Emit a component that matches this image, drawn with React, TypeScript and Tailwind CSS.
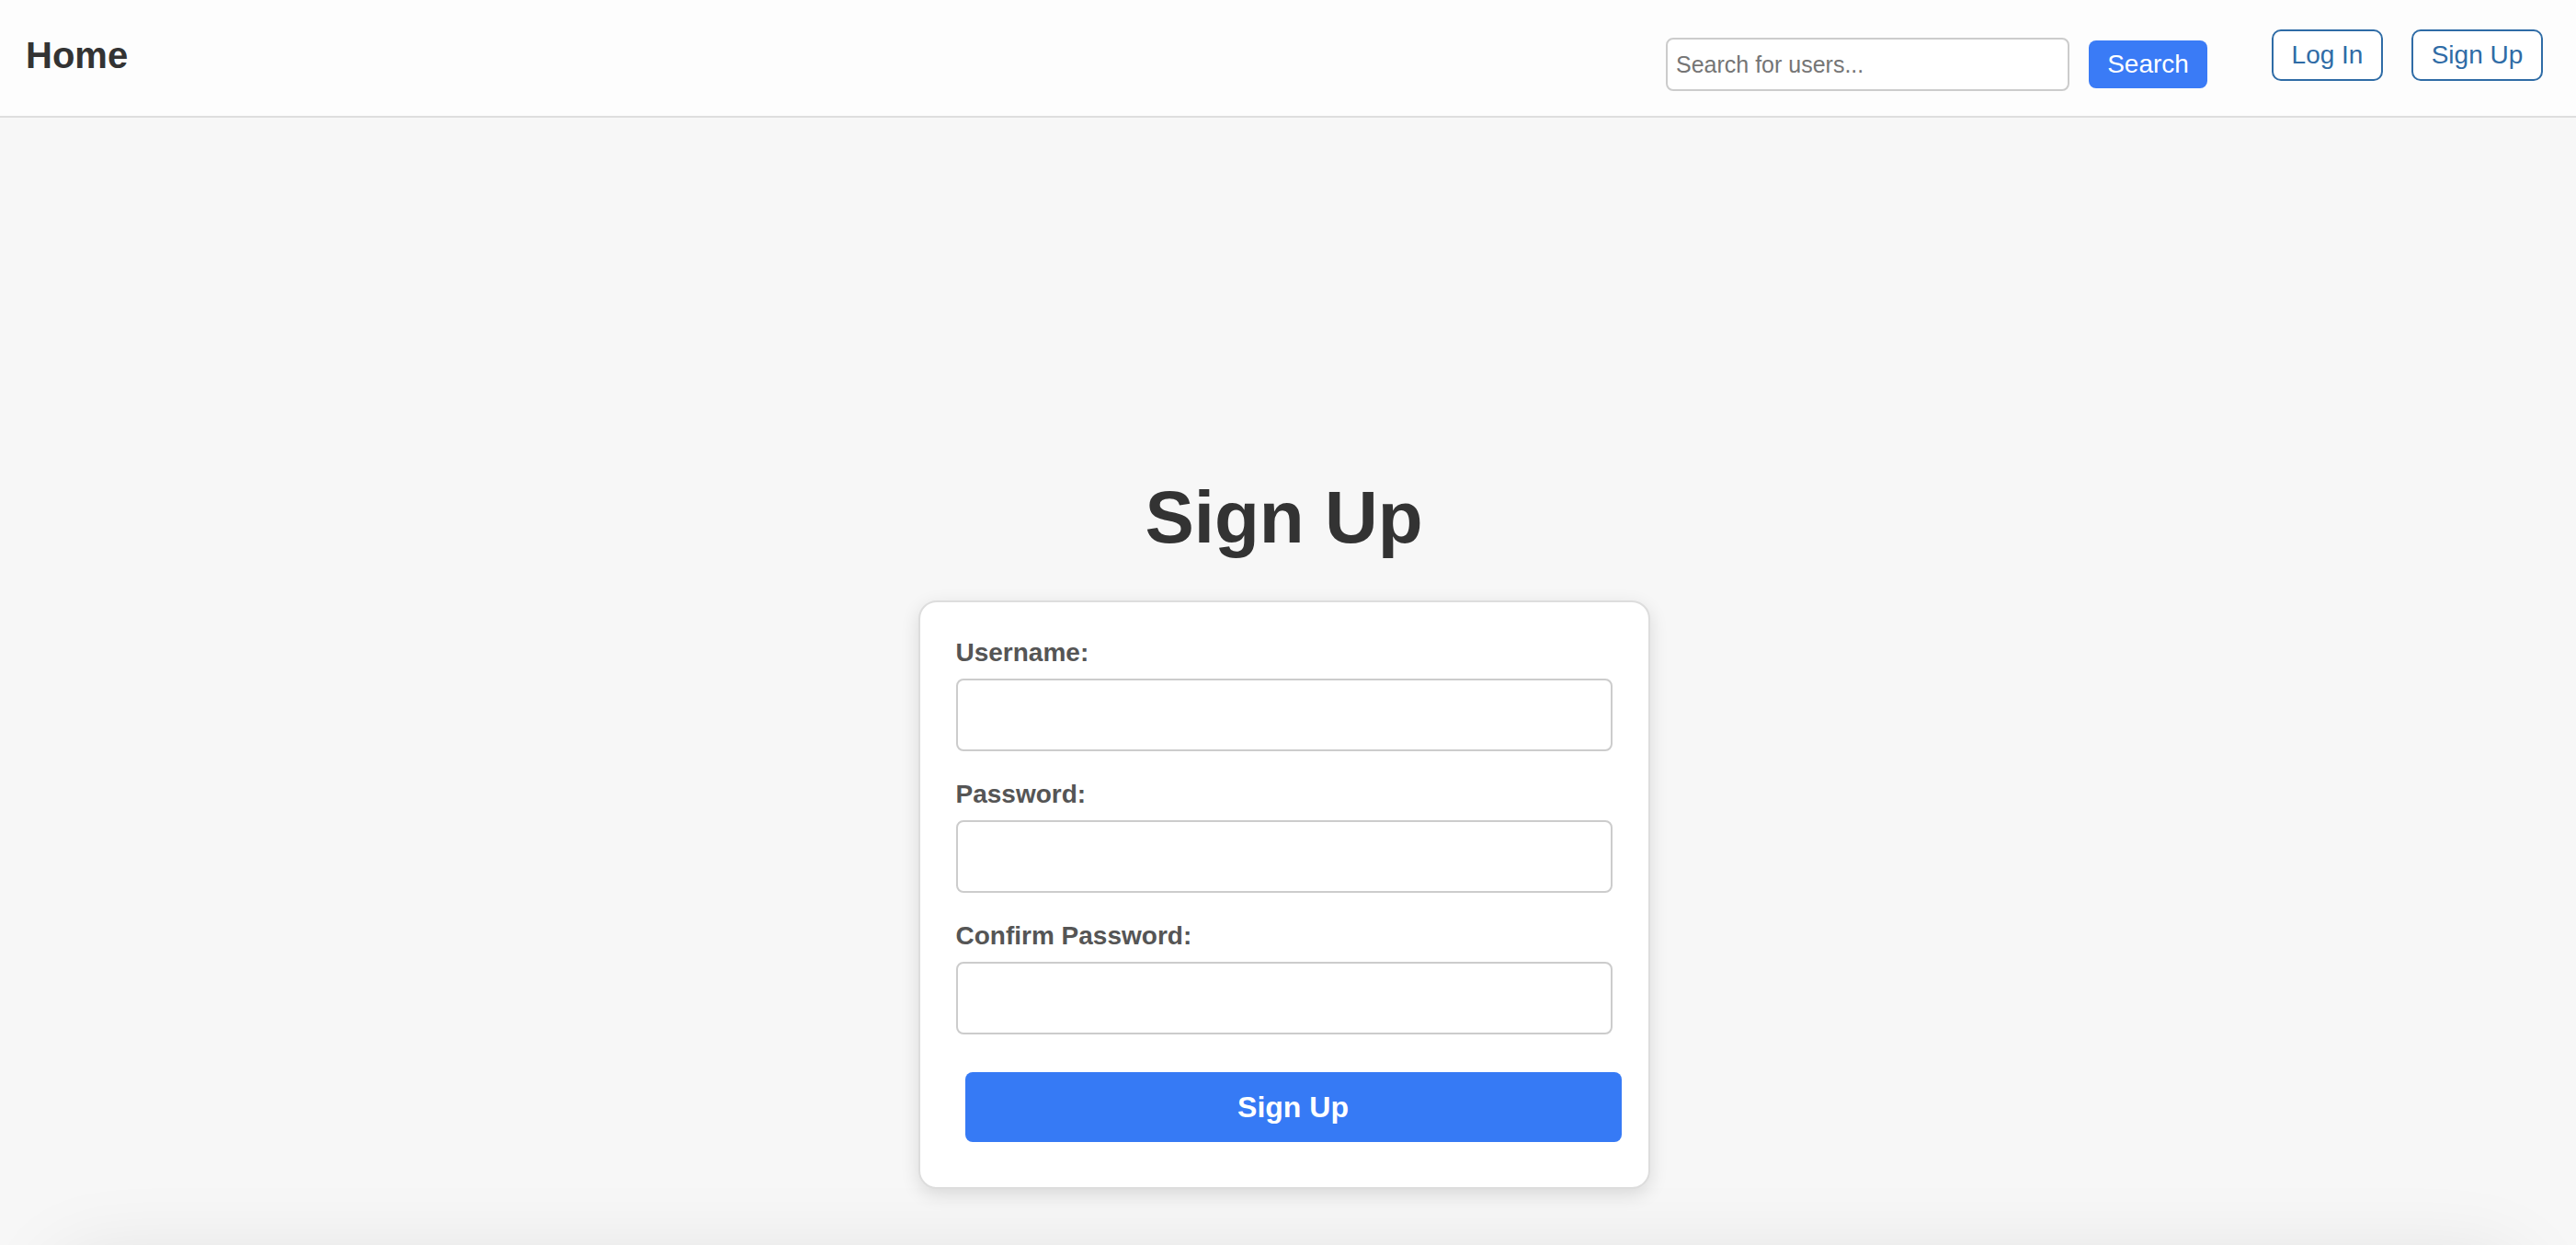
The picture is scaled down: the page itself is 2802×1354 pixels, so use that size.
import React from "react";

export default function App() {
  const label = "block text-[28px] leading-[34px] font-bold text-[#555555] mb-[11px]";
  const input =
    "block w-full h-[79px] border-2 border-[#cccccc] rounded-[8px] bg-white px-[10px] text-[26px] outline-none";
  return (
    <div className="h-screen bg-[#f7f7f7] font-['Liberation_Sans',Arial,sans-serif] overflow-hidden">
      <header className="h-[128px] bg-[#fdfdfd] border-b-2 border-[#dedede] flex items-start pl-[28px] pr-[36px]">
        <h1 className="mt-[40px] text-[40px] leading-none font-bold text-[#333333]">Home</h1>
        <div className="ml-auto mt-[41px] flex items-center">
          <input
            type="text"
            placeholder="Search for users..."
            className="w-[439px] h-[58px] border-2 border-[#cccccc] rounded-[8px] bg-white pl-[9px] text-[25px] text-[#333] placeholder:text-[#757575] outline-none"
          />
          <button className="ml-[21px] w-[129px] h-[52px] rounded-[8px] bg-[#3a7bf6] text-white text-[28px] leading-none">
            Search
          </button>
        </div>
        <div className="ml-[70px] mt-[32px] flex items-center gap-[31px]">
          <button className="w-[121px] h-[56px] border-2 border-[#2f6ca6] rounded-[10px] text-[#2f6ca6] text-[28px] leading-none bg-white">
            Log In
          </button>
          <button className="w-[143px] h-[56px] border-2 border-[#2f6ca6] rounded-[10px] text-[#2f6ca6] text-[28px] leading-none bg-white">
            Sign Up
          </button>
        </div>
      </header>
      <main className="flex flex-col items-center pt-[395px] pb-[77px] pr-[9px]">
        <h2 className="text-[80px] leading-none font-bold text-[#333333]">Sign Up</h2>
        <form className="mt-[50px] w-[796px] bg-white border-2 border-[#dddddd] rounded-[20px] shadow-[0_6px_20px_rgba(0,0,0,0.12)] px-[39px] pt-[38px] pb-[49px]">
          <label className={label}>Username:</label>
          <input type="text" className={input} />
          <label className={label + " mt-[30px]"}>Password:</label>
          <input type="password" className={input} />
          <label className={label + " mt-[30px]"}>Confirm Password:</label>
          <input type="password" className={input} />
          <button
            type="button"
            className="mt-[41px] ml-[10px] w-full h-[76px] rounded-[8px] bg-[#367af5] text-white text-[32px] font-bold leading-none"
          >
            Sign Up
          </button>
        </form>
      </main>
      <div className="mx-[60px] h-[200px] rounded-[40px] bg-[#f7f7f7] shadow-[0_0_90px_rgba(0,0,0,0.10)]"></div>
    </div>
  );
}
